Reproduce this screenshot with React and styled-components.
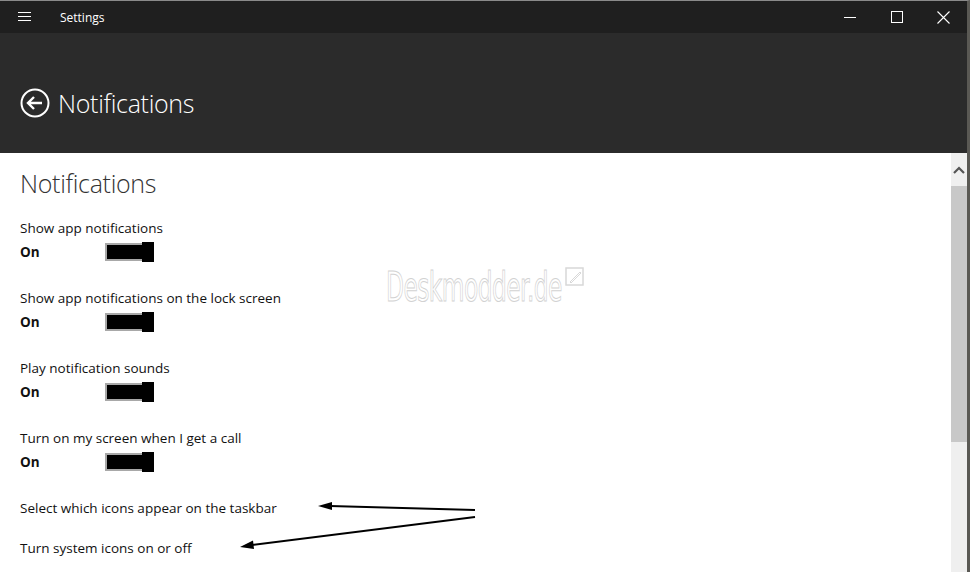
import styled, { createGlobalStyle } from 'styled-components';

const GlobalStyle = createGlobalStyle`
  html, body {
    margin: 0;
    padding: 0;
    background: #ffffff;
  }
  body {
    font-family: "Segoe UI", "Open Sans", "Noto Sans", sans-serif;
  }
`;

const Window = styled.div`
  width: 970px;
  height: 572px;
  display: flex;
  flex-direction: column;
  box-sizing: border-box;
  border-top: 1px solid #8a8a8a;
  border-right: 3px solid #5a5954;
  overflow: hidden;
  position: relative;
`;

const TitleBar = styled.div`
  height: 32px;
  background: #1f1f1f;
  display: flex;
  align-items: center;
  color: #ffffff;
  flex-shrink: 0;
`;

const MenuButton = styled.div`
  width: 48px;
  height: 32px;
  display: flex;
  align-items: center;
  justify-content: flex-start;
  padding-left: 18px;
  box-sizing: border-box;
`;

const AppName = styled.span`
  margin-left: 12px;
  font-size: 12px;
  color: #ffffff;
`;

const Caption = styled.div`
  margin-left: auto;
  display: flex;
`;

const CaptionButton = styled.div`
  width: 47px;
  height: 32px;
  display: flex;
  align-items: center;
  justify-content: center;
`;

const Header = styled.div`
  height: 120px;
  box-sizing: border-box;
  background: #2b2b2b;
  display: flex;
  align-items: flex-end;
  padding: 0 0 35px 20px;
  flex-shrink: 0;
`;

const BackIcon = styled.svg`
  display: block;
`;

const HeaderTitle = styled.h1`
  margin: 0 0 0 8px;
  font-size: 25px;
  line-height: 30px;
  font-weight: 300;
  color: #ffffff;
  letter-spacing: -0.3px;
`;

const Body = styled.div`
  flex: 1;
  display: flex;
  min-height: 0;
`;

const Content = styled.div`
  flex: 1;
  padding: 14px 20px 0 20px;
  color: #000000;
  position: relative;
`;

const PageTitle = styled.h2`
  margin: 0 0 19px 0;
  font-size: 25px;
  font-weight: 300;
  color: #333333;
  letter-spacing: -0.3px;
  line-height: 32px;
`;

const Setting = styled.div`
  height: 70px;
`;

const Label = styled.div`
  font-size: 13.5px;
  line-height: 20px;
  color: #111111;
`;

const StateRow = styled.div`
  display: flex;
  align-items: center;
  margin-top: 4px;
`;

const StateText = styled.span`
  width: 85px;
  font-size: 13.5px;
  font-weight: 700;
  color: #111111;
`;

const Toggle = styled.div`
  width: 50px;
  height: 20px;
  display: flex;
  align-items: center;
`;

const Track = styled.div`
  width: 40px;
  height: 18px;
  box-sizing: border-box;
  border: 2px solid #a8a8a8;
  background: #000000;
`;

const Knob = styled.div`
  width: 12px;
  height: 20px;
  background: #000000;
  margin-left: -3px;
`;

const Link = styled.div`
  font-size: 13.5px;
  line-height: 20px;
  color: #111111;
  margin-bottom: ${(p) => p.gap || 0}px;
`;

const Watermark = styled.div`
  position: absolute;
  left: 386px;
  top: 113px;
  display: flex;
  align-items: flex-start;
`;

const WatermarkText = styled.span`
  display: inline-block;
  width: 178px;
  font-family: "Liberation Sans Narrow", "DejaVu Sans", sans-serif;
  font-size: 41px;
  line-height: 42px;
  letter-spacing: -1px;
  color: #ffffff;
  -webkit-text-stroke: 1px #d2d2d2;
  transform: scaleX(0.57);
  transform-origin: left top;
  white-space: nowrap;
`;

const Arrows = styled.svg`
  position: absolute;
  left: 0;
  top: 0;
  pointer-events: none;
`;

const ScrollBar = styled.div`
  width: 16px;
  background: #efefef;
  display: flex;
  flex-direction: column;
  align-items: center;
`;

const ScrollArrow = styled.div`
  height: 33px;
  display: flex;
  align-items: center;
  justify-content: center;
`;

const Thumb = styled.div`
  width: 16px;
  height: 256px;
  background: #c8c8c8;
`;

const toggles = [
  'Show app notifications',
  'Show app notifications on the lock screen',
  'Play notification sounds',
  'Turn on my screen when I get a call',
];

export default function App() {
  return (
    <Window>
      <GlobalStyle />
      <TitleBar>
        <MenuButton>
          <svg width="13" height="10" viewBox="0 0 13 10">
            <path d="M0 0.5H13M0 4.5H13M0 8.5H13" stroke="#fff" strokeWidth="1" />
          </svg>
        </MenuButton>
        <AppName>Settings</AppName>
        <Caption>
          <CaptionButton>
            <svg width="12" height="12" viewBox="0 0 12 12">
              <path d="M0 6.5H12" stroke="#fff" strokeWidth="1" />
            </svg>
          </CaptionButton>
          <CaptionButton>
            <svg width="12" height="12" viewBox="0 0 12 12">
              <rect x="0.5" y="0.5" width="11" height="11" fill="none" stroke="#fff" strokeWidth="1" />
            </svg>
          </CaptionButton>
          <CaptionButton>
            <svg width="13" height="13" viewBox="0 0 13 13">
              <path d="M0.5 0.5L12.5 12.5M12.5 0.5L0.5 12.5" stroke="#fff" strokeWidth="1.1" />
            </svg>
          </CaptionButton>
        </Caption>
      </TitleBar>

      <Header>
        <BackIcon width="30" height="30" viewBox="0 0 30 30">
          <circle cx="15" cy="15" r="13.5" fill="none" stroke="#fff" strokeWidth="2" />
          <path d="M8 15H22M14 9L8 15L14 21" fill="none" stroke="#fff" strokeWidth="2.4" />
        </BackIcon>
        <HeaderTitle>Notifications</HeaderTitle>
      </Header>

      <Body>
        <Content>
          <PageTitle>Notifications</PageTitle>
          {toggles.map((t) => (
            <Setting key={t}>
              <Label>{t}</Label>
              <StateRow>
                <StateText>On</StateText>
                <Toggle>
                  <Track />
                  <Knob />
                </Toggle>
              </StateRow>
            </Setting>
          ))}
          <Link gap={20}>Select which icons appear on the taskbar</Link>
          <Link>Turn system icons on or off</Link>

          <Watermark>
            <WatermarkText>Deskmodder.de</WatermarkText>
            <svg width="20" height="20" viewBox="0 0 20 20" style={{ marginLeft: 1, marginTop: 1 }}>
              <rect x="1" y="1" width="17" height="17" fill="none" stroke="#d8d8d8" strokeWidth="1.5" />
              <path d="M5 15L15 5L16 6L6 16Z" fill="none" stroke="#d8d8d8" strokeWidth="1" />
            </svg>
          </Watermark>

          <Arrows width="500" height="420" viewBox="0 0 500 420">
            <path d="M475 357L330 353" stroke="#000" strokeWidth="2" />
            <path d="M318 353L332 349L332 357Z" fill="#000" />
            <path d="M475 364L252 392" stroke="#000" strokeWidth="2" />
            <path d="M240 394L253 387.5L254 396Z" fill="#000" />
          </Arrows>
        </Content>
        <ScrollBar>
          <ScrollArrow>
            <svg width="12" height="8" viewBox="0 0 12 8">
              <path d="M1 7L6 2L11 7" fill="none" stroke="#555" strokeWidth="2.2" />
            </svg>
          </ScrollArrow>
          <Thumb />
        </ScrollBar>
      </Body>
    </Window>
  );
}
